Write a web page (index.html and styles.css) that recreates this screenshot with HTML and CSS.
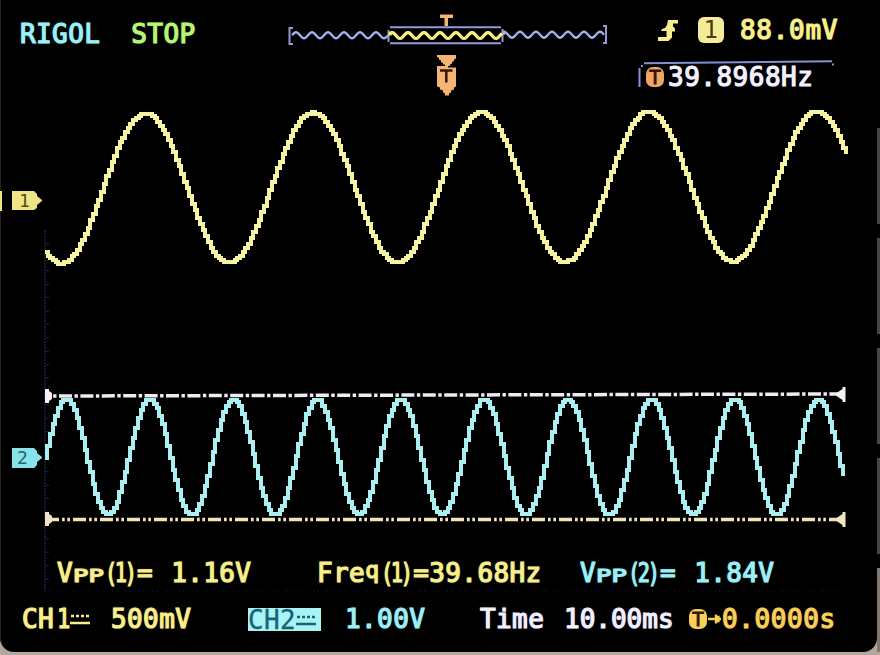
FILE: index.html
```html
<!DOCTYPE html>
<html lang="en">
<head>
<meta charset="utf-8">
<title>Oscilloscope</title>
<link rel="stylesheet" href="styles.css">
</head>
<body>
<main class="screen">
  <header class="header">
    <div class="brand"><span class="cyan">RIGOL</span><span class="green">STOP</span></div>
    <svg class="memory" viewBox="280 0 340 100" aria-hidden="true">
      <g class="frame"><path d="M293 28H289.500V44H293M603 26H606V43H603"/><path d="M390 27.2H501M390 43.3H501M388.5 30V42M502.5 29V42"/></g>
      <path id="mem-left" class="mem"/><path id="mem-right" class="mem"/><path id="mem-mid" class="mem mid"/>
      <path class="orange" d="M440 14.5h13v3.5h-5v8h-3.5v-8H440zM437 55h19v3.500l-2 1v1.500l-2 1v1.500l-2 1v1.500h-2v1.500h8v19l-2 1v2l-3 1v2l-2 1v2h-4v-2l-2-1v-2l-3-1v-2l-3-1V66h8v-1.500h-2v-1.500l-2-1v-1.500l-2-1v-1.500l-2-1z"/>
      <path class="cut" d="M440 70.500h12.500M446.300 70v12.500"/>
    </svg>
    <div class="trigger">
      <div class="level yellow">
        <svg class="edge" viewBox="658 20 21 22" aria-hidden="true"><path d="M668 21h10v3.500h-5v3l2 2v3h-3v6l-3.500 3.500H658V38h8.500v-6H661l1-2 3-1 2-3z"/></svg>
        <span class="source">1</span><span>88.0mV</span>
      </div>
      <div class="counter">
        <svg class="counter-line" viewBox="637 60 198 29" aria-hidden="true"><path d="M638.500 68V87M640 66h2M643 63.300L831 61.300M832 63.500v2"/></svg>
        <span class="t-badge">T</span><span>39.8968Hz</span>
      </div>
    </div>
  </header>

  <section class="plot">
    <svg viewBox="0 100 880 450" aria-label="Channel waveforms">
      <path class="axis" d="M45 230V591"/><path class="axis floor" d="M45 591H845"/><path class="ticks" id="ticks"/>
      <path class="zero" d="M46 457.500H845"/>
      <path class="cursor white" d="M53 396L840 394"/>
      <path class="cursor pale" d="M52 519.500H840"/>
      <path class="fill-white" d="M45 389h4v2l3 2v6l-3 2v2h-4zM845.500 387h-3v2l-3 2-3 2v3l3 2 3 2v2h3z"/>
      <path class="fill-pale" d="M45 512h4v2l3 2v6l-3 2v2h-4zM845.500 512h-3v2l-3 2-3 2v3l3 2 3 2v2h3z"/>
      <path id="ch1" class="wave wave1"/>
      <path id="ch2" class="wave wave2"/>
      <path class="fill-y" d="M12 191h22l3 3v2l5 4v1l-5 4v3l-3 2H12zM0 191h2v20H0z"/>
      <path class="fill-c" d="M12 448h22l3 3v2l5 4v1l-5 4v3l-3 3H12z"/>
      <text class="tag tag1" x="24.500" y="207">1</text>
      <text class="tag tag2" x="22.500" y="464">2</text>
    </svg>
  </section>

  <section class="measures">
    <div class="m1 yellow">V<span class="small">pp</span><span class="paren">(1)</span>=<span class="value">1.16V</span></div>
    <div class="m2 yellow">Fre<span class="q">q</span><span class="paren">(1)</span>=39.68Hz</div>
    <div class="m3 cyan">V<span class="small">pp</span><span class="paren">(2)</span>=<span class="value">1.84V</span></div>
  </section>

  <footer class="status">
    <div class="ch1 yellow">CH<span class="num">1</span><svg class="dc" viewBox="0 0 20 20" aria-hidden="true"><path class="dots" d="M1 7H20"/><path d="M0 14H20"/></svg></div>
    <div class="scale1 yellow">500mV</div>
    <div class="ch2">CH2<svg class="dc" viewBox="0 0 20 20" aria-hidden="true"><path class="dots" d="M1 7H20"/><path d="M0 14H20"/></svg></div>
    <div class="scale2 cyan">1.00V</div>
    <div class="time white">Time</div>
    <div class="base white">10.00ms</div>
    <div class="offset amber"><span class="t-badge">T</span><svg class="arrow" viewBox="0 0 14 20" aria-hidden="true"><path d="M0 10H13M8 5.500V8H10.500V12H8V14.500"/></svg><span>0.0000s</span></div>
  </footer>
</main>
<aside class="keys"><i></i><i></i><i></i><i></i><i></i></aside>
<script src="waves.js"></script>
</body>
</html>
```
FILE: styles.css
```css
* { box-sizing: border-box; }
body {
  margin: 0;
  width: 880px;
  height: 655px;
  display: flex;
  overflow: hidden;
  background: #b3a89f;
  font: 26px/30px "DejaVu Sans Mono", monospace;
  letter-spacing: 0.4px;
  -webkit-text-stroke: 1.2px currentColor;
  white-space: nowrap;
}
svg { display: block; fill: none; flex: none; }
.screen {
  width: 877px;
  height: 652px;
  flex: none;
  background: #000;
  border-left: 1px solid #2a2018;
  border-radius: 0 0 14px 14px;
}
.keys { width: 3px; height: 652px; background: #000; padding-top: 128px; display: flex; flex-direction: column; gap: 14px; }
.keys i { flex: 0 0 96px; background: #4b443f; }
.keys i:last-child { flex: 1; background: #81776f; }
.yellow { color: #f7ef8e; text-shadow: 0 0 2px #a28f27; }
.cyan { color: #9deff5; text-shadow: 0 0 2px #248d9c; }
.green { color: #b9f477; text-shadow: 0 0 2px #4a9d20; }
.white { color: #f2efff; text-shadow: 0 0 2px #706c9c; }
.amber { color: #f8cf59; text-shadow: 0 0 2px #a16313; }

.header { height: 100px; display: grid; grid-template-columns: 279px 340px 1fr; }
.brand { display: flex; gap: 31px; padding: 19px 0 0 19px; }
.memory { width: 340px; height: 100px; }
.frame { stroke: #8f9ad6; stroke-width: 2; }
.mem { stroke: #a4afe9; stroke-width: 2.4; stroke-linejoin: round; }
.mid { stroke: #f4ef83; stroke-width: 3.2; }
.orange { fill: #f4b475; }
.cut { stroke: #38130a; stroke-width: 2.5; }
.trigger { padding: 15px 0 0 18px; }
.level { display: flex; align-items: center; height: 30px; padding-left: 20px; }
.level span:last-child { letter-spacing: 0.7px; }
.edge { width: 21px; height: 22px; fill: #f7ef8e; }
.source { width: 26px; height: 26px; margin: 0 16px 0 19px; border-radius: 6px; background: #f5ec99; color: #4a3b12; font-size: 24px; line-height: 26px; text-align: center; text-shadow: none; -webkit-text-stroke: 0; }
.counter { position: relative; display: flex; align-items: center; height: 34px; margin-top: 15px; padding-left: 8px; color: #f1f0ff; letter-spacing: 0.5px; }
.counter-line { position: absolute; left: 0; top: 0; width: 198px; height: 29px; stroke: #8790ce; stroke-width: 2; }
.t-badge { width: 18px; height: 20px; border-radius: 7px; background: #f1a564; color: #301408; font-size: 20px; line-height: 20px; text-align: center; letter-spacing: 0; text-shadow: none; -webkit-text-stroke: 0.8px currentColor; }
.counter .t-badge { margin-right: 4px; }

.plot { width: 876px; height: 450px; }
.plot svg { width: 880px; height: 450px; margin-left: -1px; overflow: visible; }
.axis { stroke: #2c2e72; stroke-width: 1; stroke-dasharray: 2 1; }
.floor { stroke: #20204c; stroke-dasharray: 1 3 1 8.400; }
.ticks { stroke: #202452; }
.zero { stroke: #181830; stroke-dasharray: 1 12.400; }
.wave { stroke-width: 4; stroke-linejoin: miter; shape-rendering: crispEdges; }
.wave1 { stroke: #f7f3a4; }
.wave2 { stroke: #aceff3; }
.cursor { stroke-width: 3.500; }
.cursor.white { stroke: #efebf1; stroke-dasharray: 13 2.500 3.400 2.500; stroke-dashoffset: -6; }
.cursor.pale { stroke: #eee4b5; stroke-dasharray: 13 3 2.700 2.600 2.700 3; stroke-dashoffset: 6; }
.fill-white { fill: #f5f0f7; }
.fill-pale { fill: #f1e5c5; }
.fill-y { fill: #f0e586; }
.fill-c { fill: #87e4ea; }
.tag { font-size: 18px; text-anchor: middle; letter-spacing: 0; -webkit-text-stroke: 0; }
.tag1 { fill: #5a4c18; }
.tag2 { fill: #22646d; }

.measures { height: 47px; padding: 8px 0 0 56px; display: grid; grid-template-columns: 260px 263px 1fr; }
.measures > div { display: flex; height: 30px; }
.small { width: 32px; font-variant-caps: small-caps; letter-spacing: 0; transform: scaleX(1.42); transform-origin: left; }
.paren { width: 32px; letter-spacing: -3px; transform: scaleX(0.78); transform-origin: left; }
.value { margin-left: 18px; }
.q { font-size: 23px; width: 16px; position: relative; top: -3px; }

.status { height: 55px; padding: 7px 0 0 21px; display: grid; grid-template-columns: 89px 137px 97px 135px 84px 124px 1fr; }
.status > div { display: flex; align-items: center; height: 30px; }
.num { margin-left: 2px; width: 14px; }
.dc { width: 20px; height: 20px; stroke: currentColor; stroke-width: 2.500; }
.ch1 .num { transform: scaleX(0.85); }
.dots { stroke-dasharray: 3 2; }
.status .base { letter-spacing: 0; }
.status .ch2 { width: 73px; height: 23px; margin-top: 4px; background: #a9f3f5; color: #176477; -webkit-text-stroke: 0.3px currentColor; }
.offset .t-badge { background: #f8cf59; margin-left: 1px; margin-right: 1px; }
.offset { letter-spacing: 0.6px; }
.arrow { width: 14px; height: 20px; stroke: currentColor; stroke-width: 2.400; }
```
FILE: waves.js
```js
// Sampled traces are drawn as one horizontal and one vertical run per column.
function stepped(x0, x1, dx, dy, fn) {
  let d = "";
  for (let x = x0; x <= x1; x += dx) {
    const y = Math.round(fn(x) / dy) * dy;
    d += (d ? "H" + x.toFixed(1) + "V" : "M" + x.toFixed(1) + " ") + y.toFixed(1);
  }
  return d;
}
const set = (id, d) => document.getElementById(id).setAttribute("d", d);
const cosine = (peak, period, mid, amp) => x => mid - amp * Math.cos((x - peak) / period * 2 * Math.PI);

set("ch1", stepped(45, 846, 2.67, 2, x => cosine(144.3, 167.9, 188.5 - (x - 46) * 0.003, 75)(x)));
set("ch2", stepped(44.5, 845, 2.67, 2, cosine(65.4, 83.55, 457, 58)));

function zigzag(x0, x1, peak, y) {
  let d = "M" + x0 + " " + y;
  for (let x = x0; x <= x1; x += 2) d += "L" + x + " " + (y - 3.1 * Math.cos((x - peak) / 16 * 2 * Math.PI)).toFixed(1);
  return d;
}
set("mem-left", zigzag(292, 388, 296, 35.3));
set("mem-mid", zigzag(390, 502, 392, 35.5));
set("mem-right", zigzag(504, 604, 520, 34.7));

let ticks = "";
for (let y = 244; y < 590; y += 13.4) ticks += "M46 " + y + "h3";
set("ticks", ticks);
```
